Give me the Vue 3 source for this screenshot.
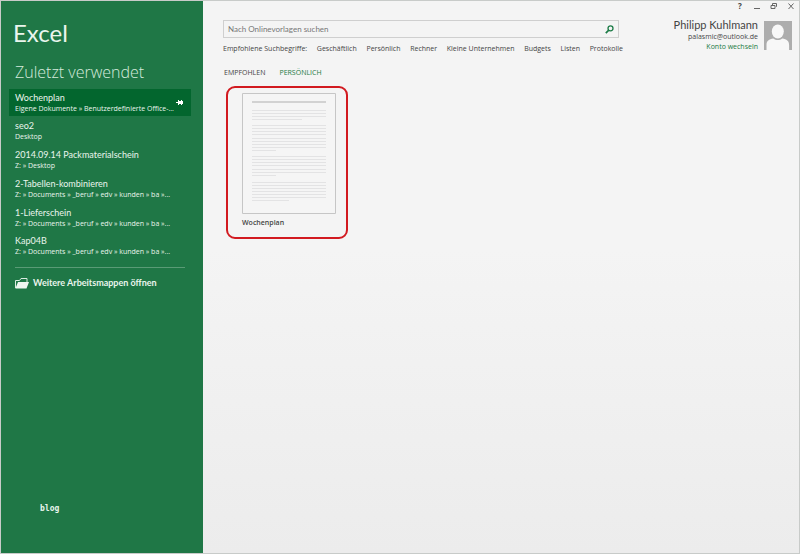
<script setup>
import { ref } from 'vue'

const query = ref('')
const files = [
  { name: 'Wochenplan', path: 'Eigene Dokumente » Benutzerdefinierte Office-...', active: true },
  { name: 'seo2', path: 'Desktop' },
  { name: '2014.09.14 Packmaterialschein', path: 'Z: » Desktop' },
  { name: '2-Tabellen-kombinieren', path: 'Z: » Documents » _beruf » edv » kunden » ba »...' },
  { name: '1-Lieferschein', path: 'Z: » Documents » _beruf » edv » kunden » ba »...' },
  { name: 'Kap04B', path: 'Z: » Documents » _beruf » edv » kunden » ba »...' },
]
const terms = ['Geschäftlich', 'Persönlich', 'Rechner', 'Kleine Unternehmen', 'Budgets', 'Listen', 'Protokolle']
const tabs = ['EMPFOHLEN', 'PERSÖNLICH']
const currentTab = ref('PERSÖNLICH')

// Text lines of the document thumbnail: [y, width]
const lines = [
  [17, 74], [20, 74], [23, 74], [26, 50],
  [32, 74], [35, 74], [38, 74], [41, 74], [45, 74], [48, 74], [51, 74], [54, 74], [57, 24],
  [63, 74], [66, 74], [69, 74], [72, 74], [76, 74], [79, 74], [82, 24],
  [89, 74], [92, 74], [95, 74], [98, 74], [101, 74], [104, 74], [107, 37],
]
</script>

<template>
  <div class="window">
    <aside class="sidebar">
      <h1 class="brand">Excel</h1>
      <h2 class="heading">Zuletzt verwendet</h2>
      <ul class="files">
        <li v-for="file in files" :key="file.name">
          <button class="file" :class="{ active: file.active }" type="button">
            <span class="labels">
              <span class="name">{{ file.name }}</span>
              <span class="path">{{ file.path }}</span>
            </span>
            <svg v-if="file.active" class="pin" viewBox="0 0 7 5" width="7" height="5" aria-hidden="true">
              <path d="M0 2h2V0h1v1h2V0h1v1h1v3H6v1H5V4H3v1H2V3H0z" />
            </svg>
          </button>
        </li>
      </ul>
      <button class="open" type="button">
        <svg viewBox="0 0 14 11" width="14" height="11" aria-hidden="true">
          <path d="M.5 10V2.500h4l1.500-2h6V4" fill="none" stroke="#d9ebe0" />
          <path d="M3 4h11L11.500 10.600H.4z" fill="#eef6f0" />
        </svg>
        Weitere Arbeitsmappen öffnen
      </button>
      <p class="blog">blog</p>
    </aside>

    <div class="content">
      <div class="controls">
        <button type="button" aria-label="Hilfe">
          <span class="help">?</span>
        </button>
        <button type="button" aria-label="Minimieren">
          <svg viewBox="0 0 8 8" width="8" height="8"><path d="M1 6.500h6" /></svg>
        </button>
        <button type="button" aria-label="Wiederherstellen">
          <svg viewBox="0 0 8 8" width="8" height="8"><path d="M2.500 3V1.500h4v3H6M1 3.500h4v3H1z" /></svg>
        </button>
        <button type="button" aria-label="Schließen">
          <svg viewBox="0 0 8 8" width="8" height="8"><path class="cross" d="M1.500 1.500l5 5.500M6.500 1.500l-5 5.500" /></svg>
        </button>
      </div>

      <div class="top">
        <div class="search">
          <form class="box" @submit.prevent>
            <input v-model="query" type="text" placeholder="Nach Onlinevorlagen suchen" aria-label="Nach Onlinevorlagen suchen" />
            <button type="submit" aria-label="Suchen">
              <svg viewBox="0 0 9 9" width="9" height="9" aria-hidden="true">
                <circle cx="5.500" cy="3.300" r="2.500" fill="none" stroke="#1c7b46" stroke-width="1.300" />
                <path d="M3.800 5.200L.8 8.200" stroke="#1c7b46" stroke-width="1.700" />
              </svg>
            </button>
          </form>
          <nav class="terms">
            <span class="lead">Empfohlene Suchbegriffe:</span>
            <a v-for="term in terms" :key="term" href="#">{{ term }}</a>
          </nav>
        </div>
        <div class="account">
          <div class="who">
            <span class="person">Philipp Kuhlmann</span>
            <span class="mail">palasmic@outlook.de</span>
            <a class="switch" href="#">Konto wechseln</a>
          </div>
          <svg class="avatar" viewBox="0 0 28 29" width="28" height="29" aria-hidden="true">
            <path fill="#adadad" d="M0 0h28v29H0z" />
            <ellipse cx="13.800" cy="10.500" rx="6" ry="7" fill="#f8f8f8" />
            <path fill="#f8f8f8" d="M2.500 29v-5c0-4 2.500-6 6.800-6.500 1.500 1.200 2.900 1.600 4.500 1.600s3-.4 4.500-1.600c4.300.5 6.800 2.500 6.800 6.500v5z" />
          </svg>
        </div>
      </div>

      <div class="tabs">
        <button
          v-for="tab in tabs"
          :key="tab"
          type="button"
          :class="{ current: tab === currentTab }"
          @click="currentTab = tab"
        >{{ tab }}</button>
      </div>

      <button class="template" type="button">
        <svg viewBox="0 0 94 121" width="94" height="121" aria-hidden="true">
          <path d="M.5.500h93v120H.5z" fill="#f5f5f5" stroke="#c6c6c6" />
          <path d="M10 8h74v2H10z" fill="#d2d2d2" />
          <rect v-for="[y, width] in lines" :key="y" x="10" :y="y" :width="width" height="1" fill="#e3e3e4" />
        </svg>
        <span>Wochenplan</span>
      </button>
    </div>
  </div>
</template>

<style>
body {
  margin: 0;
}
</style>

<style scoped>
.window {
  box-sizing: border-box;
  display: flex;
  min-height: 100vh;
  border: 1px solid #c8cbc9;
  background: linear-gradient(#f4f4f4 45%, #ececec);
  color: #444;
  font-family: "Open Sans", "Noto Sans", sans-serif;
  font-size: 7px;
}
button {
  margin: 0;
  padding: 0;
  border: 0;
  background: none;
  color: inherit;
  font: inherit;
  text-align: left;
}
a {
  color: inherit;
  text-decoration: none;
}
.brand,
.name,
.open,
.person {
  font-family: Lato, "Open Sans", sans-serif;
}
.sidebar {
  box-sizing: border-box;
  display: flex;
  flex: 0 0 202px;
  flex-direction: column;
  padding: 16px 12px 36px 8px;
  background: #1f7746;
  color: #eaf5ed;
}
.brand {
  margin: 0 4px;
  font-size: 24px;
  font-weight: 400;
  line-height: 32px;
}
.heading {
  margin: 11px 6px 5px;
  color: #d6ebdd;
  font-size: 16px;
  font-weight: 300;
  line-height: 24px;
}
.files {
  display: grid;
  align-content: space-between;
  height: 171px;
  margin: 0;
  padding: 0;
  list-style: none;
}
.file {
  display: flex;
  align-items: center;
  justify-content: space-between;
  width: 100%;
  height: 27px;
  padding: 0 8px 0 6px;
}
.file.active {
  background: #03662e;
}
.labels,
.name,
.path {
  display: block;
  white-space: nowrap;
}
.name {
  font-size: 9px;
  line-height: 12px;
}
.path {
  line-height: 10px;
}
.pin {
  fill: #fff;
}
.open {
  display: flex;
  align-items: center;
  gap: 4px;
  margin: 7px 6px 0;
  padding-top: 8px;
  border-top: 1px solid #5a9b76;
  font-size: 9px;
  font-weight: 700;
  line-height: 14px;
  white-space: nowrap;
}
.blog {
  margin: auto 31px 0;
  font-family: "DejaVu Sans Mono", monospace;
  font-size: 8px;
  font-weight: 700;
  line-height: 16px;
}
.content {
  flex: 1;
  min-width: 0;
  padding-right: 4px;
  padding-left: 20px;
}
.controls {
  display: flex;
  justify-content: flex-end;
  gap: 9px;
  height: 9px;
}
.controls button {
  display: flex;
  align-items: center;
  justify-content: center;
  width: 8px;
}
.controls svg {
  fill: none;
  stroke: #666;
  stroke-width: 1;
}
.help {
  font-size: 8px;
  font-weight: 700;
  line-height: 9px;
}
.top {
  display: flex;
  justify-content: space-between;
  padding: 9px 3px 0 0;
}
.search {
  flex: 0 1 400px;
}
.box {
  display: flex;
  align-items: center;
  box-sizing: border-box;
  height: 18px;
  margin: 1px 4px 0 0;
  border: 1px solid #cfcfcf;
}
.box input {
  flex: 1;
  min-width: 0;
  padding: 0 4px;
  border: 0;
  outline: 0;
  background: none;
  color: #444;
  font: 8px Lato, "Open Sans", sans-serif;
}
.box input::placeholder {
  color: #777;
  opacity: 1;
}
.box button {
  display: flex;
  padding-right: 4px;
}
.terms {
  display: flex;
  justify-content: space-between;
  padding-top: 6px;
  line-height: 10px;
  white-space: nowrap;
}
.account {
  display: flex;
  gap: 6px;
}
.who {
  display: flex;
  flex-direction: column;
  align-items: flex-end;
  white-space: nowrap;
  line-height: 10px;
}
.person {
  font-size: 11px;
  line-height: 12px;
}
.mail {
  line-height: 11px;
}
.switch {
  color: #1b7a43;
}
.avatar {
  margin-top: 2px;
}
.tabs {
  display: flex;
  gap: 14px;
  padding: 13px 1px 7px;
  line-height: 12px;
}
.tabs .current {
  color: #1b7a43;
}
.template {
  display: flex;
  flex-direction: column;
  gap: 4px;
  box-sizing: border-box;
  width: 122px;
  margin-left: 3px;
  padding: 5px 14px 9px;
  border: 2px solid #d21a20;
  border-radius: 9px;
  font-weight: 600;
  line-height: 10px;
}
</style>
